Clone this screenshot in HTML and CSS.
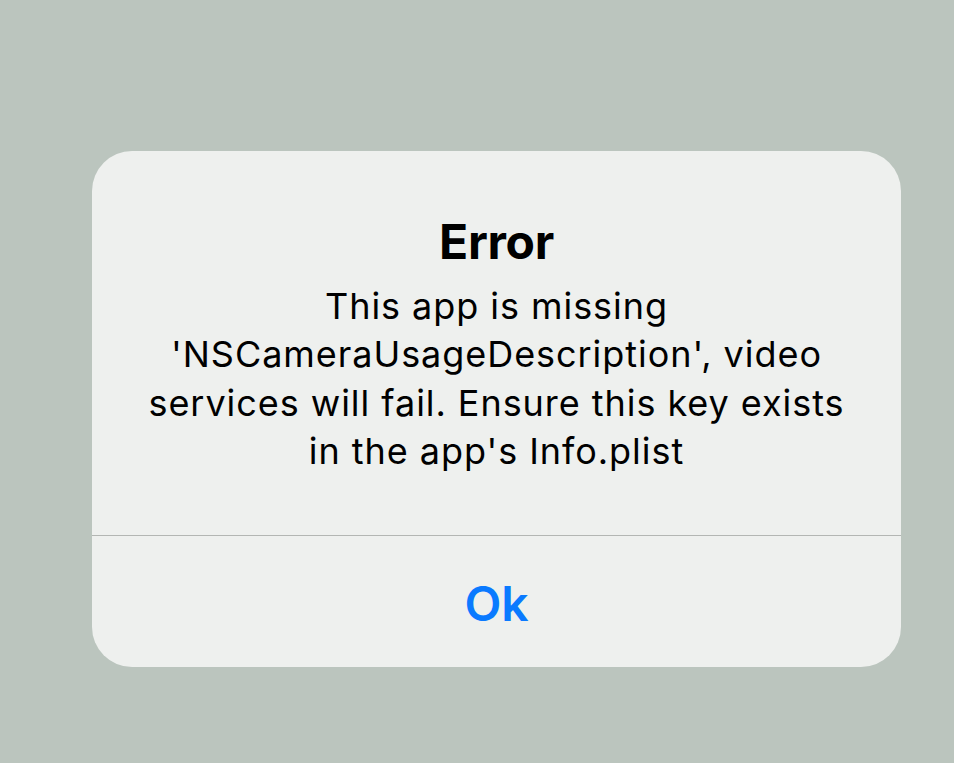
FILE: index.html
```html
<!DOCTYPE html>
<html>
<head>
<meta charset="utf-8">
<link rel="stylesheet" href="styles.css">
</head>
<body>
<div class="alert">
  <div class="content">
    <div class="title">Error</div>
    <div class="message">This app is missing<br>'NSCameraUsageDescription', video<br>services will fail. Ensure this key exists<br>in the app's Info.plist</div>
  </div>
  <div class="actions">
    <div class="btn">Ok</div>
  </div>
</div>
</body>
</html>
```
FILE: styles.css
```css
html, body {
  margin: 0;
  padding: 0;
}
body {
  background: #bbc5be;
  width: 954px;
  height: 763px;
  overflow: hidden;
  font-family: Inter, "Noto Sans", sans-serif;
}
.alert {
  margin: 151px 0 0 92px;
  width: 809px;
  height: 516px;
  background: #eef0ee;
  border-radius: 40px;
  display: flex;
  flex-direction: column;
  overflow: hidden;
}
.content {
  height: 385px;
  border-bottom: 1px solid #b3b6b3;
  display: flex;
  flex-direction: column;
  align-items: center;
  padding-top: 61px;
  box-sizing: border-box;
}
.title {
  font-size: 48px;
  font-weight: 700;
  line-height: 60px;
  color: #000;
  letter-spacing: -0.3px;
}
.message {
  margin-top: 10px;
  font-size: 36px;
  line-height: 48.3px;
  letter-spacing: 0.95px;
  text-align: center;
  color: #000;
}
.actions {
  flex: 1;
  display: flex;
  align-items: center;
  justify-content: center;
}
.btn {
  font-size: 48px;
  font-weight: 600;
  color: #0a7aff;
  padding-top: 4px;
}
```
